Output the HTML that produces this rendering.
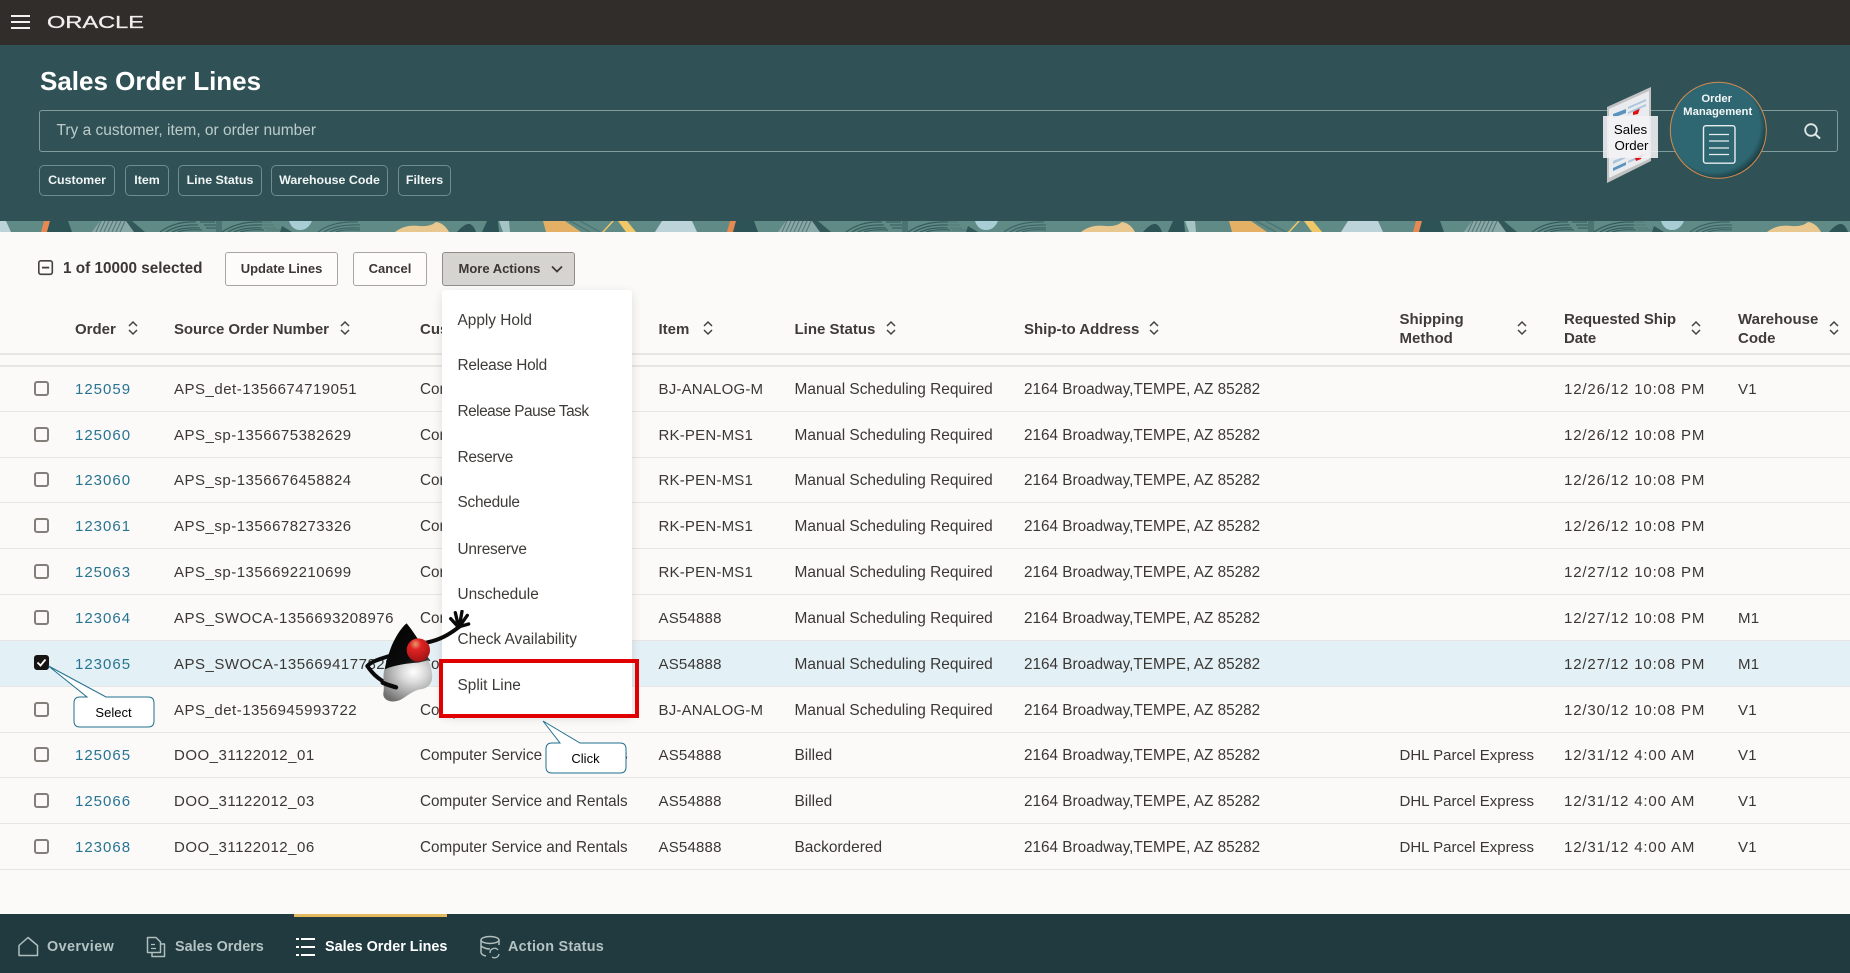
<!DOCTYPE html>
<html lang="en">
<head>
<meta charset="utf-8">
<title>Sales Order Lines</title>
<style>
*{box-sizing:border-box}
html,body{margin:0;padding:0;width:1850px;height:973px;overflow:hidden;background:#fbfaf8;font-family:"Liberation Sans",Arial,sans-serif;color:#3a3734}
.abs,.r,.h,.chip,.btn,.mi,.cb,.nav{position:absolute}
.chip{top:165px;height:31px;border:1.5px solid #6d8d8e;border-radius:5px;color:#f1f5f5;font-size:12.4px;font-weight:bold;line-height:28px;text-align:center;white-space:nowrap}
.btn{top:252px;height:34px;border:1.5px solid #a8a5a1;border-radius:3px;background:#fdfcfb;color:#3a3734;font-size:13px;font-weight:bold;line-height:32px;text-align:center;white-space:nowrap}
.h{font-size:15px;font-weight:bold;line-height:19px;color:#3f3b38;white-space:nowrap}
.r{left:0;width:1850px;height:46px;border-bottom:1.5px solid #e8e6e3;font-size:15px;line-height:46px}
.r span{position:absolute;top:1px;white-space:nowrap}
.r .o{left:75px;color:#287493;letter-spacing:1px}
.r .s{left:174px;letter-spacing:.5px}
.r .c{left:420px;font-size:15.25px}
.r .i{left:658.500px;letter-spacing:.2px}
.r .l{left:794.500px;font-size:15.450px}
.r .a{left:1024px;font-size:15.300px}
.r .m{left:1399.500px}
.r .d{left:1564px;letter-spacing:.85px}
.r .w{left:1738px;letter-spacing:.3px}
.cb{left:34px;top:15px;width:15px;height:15px;border:2px solid #827f7b;border-radius:3px;background:#fbfaf8}
.mi{left:457.500px;font-size:15.400px;line-height:20px;color:#3d3a37;white-space:nowrap}
.nav{top:938px;font-size:14.400px;line-height:18px;font-weight:bold;color:#b4c2c2;white-space:nowrap}
</style>
</head>
<body>
<div class="abs" style="left:0;top:0;width:1850px;height:45px;background:#312d2a"></div>
<svg class="abs" style="left:0;top:0" width="160" height="45" viewBox="0 0 160 45">
<rect x="11" y="15" width="19" height="2" fill="#f3f2f0"/><rect x="11" y="21" width="19" height="2" fill="#f3f2f0"/><rect x="11" y="27" width="19" height="2" fill="#f3f2f0"/>
<text x="47" y="28" font-family="Liberation Sans, Arial, sans-serif" font-size="17.500" fill="#f1efed" stroke="#f1efed" stroke-width=".3" textLength="97" lengthAdjust="spacingAndGlyphs">ORACLE</text>
</svg>

<div class="abs" style="left:0;top:45px;width:1850px;height:176px;background:#305256"></div>
<div class="abs" style="left:40px;top:65px;font-size:26px;font-weight:bold;line-height:32px;color:#fff;white-space:nowrap">Sales Order Lines</div>
<div class="abs" style="left:39px;top:110px;width:1799px;height:42px;border:1.5px solid #7f9b9c;border-radius:3px"></div>
<div class="abs" style="left:56.500px;top:121px;font-size:15.500px;line-height:19px;color:#bdcbcb;white-space:nowrap">Try a customer, item, or order number</div>
<svg class="abs" style="left:1800px;top:120px" width="24" height="24" viewBox="0 0 24 24"><circle cx="11" cy="10" r="5.800" fill="none" stroke="#dfe7e7" stroke-width="1.800"/><path d="M15.300 14.300L19.500 18" stroke="#dfe7e7" stroke-width="2" stroke-linecap="round"/></svg>
<div class="chip" style="left:39px;width:76px">Customer</div>
<div class="chip" style="left:125px;width:44px">Item</div>
<div class="chip" style="left:178px;width:84px">Line Status</div>
<div class="chip" style="left:271px;width:117px">Warehouse Code</div>
<div class="chip" style="left:398px;width:53px">Filters</div>

<svg class="abs" style="left:0;top:221px" width="1850" height="11" viewBox="0 0 1850 11">
<defs>
<pattern id="b" x="0" y="0" width="686" height="11" patternUnits="userSpaceOnUse">
<rect width="686" height="11" fill="#5f8a85"/>
<polygon points="662,0 692,0 697,11 655,11" fill="#bcd3d9"/>
<polygon points="-24,0 6,0 11,11 -31,11" fill="#bcd3d9"/>
<polygon points="44,0 50,0 47,11 41,11" fill="#e68a52"/>
<polygon points="50,0 68,0 72,11 47,11" fill="#2d5356"/>
<polygon points="100,0 128,0 138,11 92,11" fill="#8aa8a7"/>
<path d="M96 11L101 0M100 11L105 0M104 11L109 0M108 11L113 0M112 11L117 0M116 11L121 0M120 11L125 0" stroke="#577a78" stroke-width="1.200"/>
<polygon points="126,0 132,0 145,11 134,11" fill="#33585a"/>
<path d="M160 11Q175 0 196 1M166 11Q178 3 198 4M172 11Q182 6 200 7M178 11Q186 8 202 9M200 1H215M204 4H216M206 7H216M222 11Q238 0 262 1M228 11Q241 3 262 4M234 11Q245 6 262 7M240 11Q250 8 264 9" stroke="#33585a" stroke-width="1.100" fill="none"/>
<polygon points="216,0 222,0 222,11 216,11" fill="#4a7371"/>
<path d="M262 1L272 1M262 4L274 4M264 7L276 7M266 9L280 9" stroke="#537a78" stroke-width="1.100"/>
<polygon points="282,5 292,11 280,11" fill="#33585a"/>
<path d="M289 0H312Q308 9 300 9Q292 9 289 0Z" fill="#a9cdd4"/>
<path d="M318 11Q332 0 358 1M324 11Q336 3 360 4M330 11Q340 6 360 7M336 11Q344 8 360 9" stroke="#3b6163" stroke-width="1.100" fill="none"/>
<path d="M395 11Q405 3 420 5Q430 6 436 1Q444 2 449 11Z" fill="#e9c88f"/>
<path d="M457 11Q465 2 470 3Q474 5 476 11Z" fill="#2d5356"/>
<polygon points="482,11 487,0 498,0 499,11" fill="#2d5356"/>
<polygon points="499,0 509,0 510,11 503,11" fill="#a5c4c5"/>
<polygon points="543,0 565,0 581,11 546,11" fill="#e3b066"/>
<path d="M570 0L590 11M580 0L600 11" stroke="#4f7675" stroke-width="1.500"/>
<polygon points="612,0 614,0 604,11 602,11" fill="#f1c868"/>
<polygon points="618,0 627,0 636,11 626,11" fill="#f1c868"/>
</pattern>
</defs>
<rect width="1850" height="11" fill="url(#b)"/>
</svg>

<svg class="abs" style="left:37px;top:259px" width="18" height="18" viewBox="0 0 18 18"><rect x="1.800" y="1.800" width="13.500" height="13.500" rx="2" fill="none" stroke="#45413e" stroke-width="1.600"/><rect x="5" y="7.700" width="7.200" height="1.800" fill="#45413e"/></svg>
<div class="abs" style="left:63px;top:259px;font-size:15.300px;font-weight:bold;line-height:19px;color:#3a3734;white-space:nowrap">1 of 10000 selected</div>
<div class="btn" style="left:225px;width:113px">Update Lines</div>
<div class="btn" style="left:353px;width:74px">Cancel</div>
<div class="btn" style="left:442px;width:133px;background:#d6d4d1;border-color:#908d89;text-align:left;padding-left:15.500px">More Actions</div>
<svg class="abs" style="left:549px;top:262px" width="16" height="14" viewBox="0 0 16 14"><path d="M3 4.500L8 9.500L13 4.500" fill="none" stroke="#3a3734" stroke-width="1.700"/></svg>

<!-- Table header -->
<div class="h" style="left:75px;top:320px">Order</div>
<div class="h" style="left:174px;top:320px;letter-spacing:-.1px">Source Order Number</div>
<div class="h" style="left:420px;top:320px">Customer</div>
<div class="h" style="left:658.500px;top:320px">Item</div>
<div class="h" style="left:794.500px;top:320px">Line Status</div>
<div class="h" style="left:1024px;top:320px">Ship-to Address</div>
<div class="h" style="left:1399.500px;top:310px">Shipping<br>Method</div>
<div class="h" style="left:1564px;top:310px;letter-spacing:-.1px">Requested Ship<br>Date</div>
<div class="h" style="left:1738px;top:310px">Warehouse<br>Code</div>
<svg class="abs" style="left:0;top:315px" width="1850" height="30" viewBox="0 0 1850 30">
<g fill="none" stroke="#45413e" stroke-width="1.500">
<path d="M129 11l4-4 4 4M129 15l4 4 4-4"/>
<path d="M341 11l4-4 4 4M341 15l4 4 4-4"/>
<path d="M704 11l4-4 4 4M704 15l4 4 4-4"/>
<path d="M887 11l4-4 4 4M887 15l4 4 4-4"/>
<path d="M1150 11l4-4 4 4M1150 15l4 4 4-4"/>
<path d="M1518 11l4-4 4 4M1518 15l4 4 4-4"/>
<path d="M1692 11l4-4 4 4M1692 15l4 4 4-4"/>
<path d="M1830 11l4-4 4 4M1830 15l4 4 4-4"/>
</g>
</svg>
<div class="abs" style="left:0;top:353px;width:1850px;height:1.500px;background:#e8e6e3"></div>
<div class="abs" style="left:0;top:365px;width:1850px;height:1.500px;background:#e8e6e3"></div>

<!-- Rows -->
<div class="r" style="top:366px"><div class="cb"></div><span class="o">125059</span><span class="s">APS_det-1356674719051</span><span class="c">Computer</span><span class="i">BJ-ANALOG-M</span><span class="l">Manual Scheduling Required</span><span class="a">2164 Broadway,TEMPE, AZ 85282</span><span class="d">12/26/12 10:08 PM</span><span class="w">V1</span></div>
<div class="r" style="top:412px"><div class="cb"></div><span class="o">125060</span><span class="s">APS_sp-1356675382629</span><span class="c">Computer</span><span class="i">RK-PEN-MS1</span><span class="l">Manual Scheduling Required</span><span class="a">2164 Broadway,TEMPE, AZ 85282</span><span class="d">12/26/12 10:08 PM</span></div>
<div class="r" style="top:457px"><div class="cb"></div><span class="o">123060</span><span class="s">APS_sp-1356676458824</span><span class="c">Computer</span><span class="i">RK-PEN-MS1</span><span class="l">Manual Scheduling Required</span><span class="a">2164 Broadway,TEMPE, AZ 85282</span><span class="d">12/26/12 10:08 PM</span></div>
<div class="r" style="top:503px"><div class="cb"></div><span class="o">123061</span><span class="s">APS_sp-1356678273326</span><span class="c">Computer</span><span class="i">RK-PEN-MS1</span><span class="l">Manual Scheduling Required</span><span class="a">2164 Broadway,TEMPE, AZ 85282</span><span class="d">12/26/12 10:08 PM</span></div>
<div class="r" style="top:549px"><div class="cb"></div><span class="o">125063</span><span class="s">APS_sp-1356692210699</span><span class="c">Computer</span><span class="i">RK-PEN-MS1</span><span class="l">Manual Scheduling Required</span><span class="a">2164 Broadway,TEMPE, AZ 85282</span><span class="d">12/27/12 10:08 PM</span></div>
<div class="r" style="top:595px"><div class="cb"></div><span class="o">123064</span><span class="s">APS_SWOCA-1356693208976</span><span class="c">Computer</span><span class="i">AS54888</span><span class="l">Manual Scheduling Required</span><span class="a">2164 Broadway,TEMPE, AZ 85282</span><span class="d">12/27/12 10:08 PM</span><span class="w">M1</span></div>
<div class="r" style="top:641px;background:#e3f0f6"><div class="cb" style="background:#161513;border-color:#161513;top:14px"></div><span class="o">123065</span><span class="s">APS_SWOCA-1356694177828</span><span class="c">Computer</span><span class="i">AS54888</span><span class="l">Manual Scheduling Required</span><span class="a">2164 Broadway,TEMPE, AZ 85282</span><span class="d">12/27/12 10:08 PM</span><span class="w">M1</span></div>
<svg class="abs" style="left:34px;top:655px" width="15" height="15" viewBox="0 0 15 15"><path d="M3.500 7.500L6.500 10.500L11.500 4.500" fill="none" stroke="#fff" stroke-width="1.800"/></svg>
<div class="r" style="top:687px"><div class="cb"></div><span class="o">125064</span><span class="s">APS_det-1356945993722</span><span class="c">Computer</span><span class="i">BJ-ANALOG-M</span><span class="l">Manual Scheduling Required</span><span class="a">2164 Broadway,TEMPE, AZ 85282</span><span class="d">12/30/12 10:08 PM</span><span class="w">V1</span></div>
<div class="r" style="top:732px"><div class="cb"></div><span class="o">125065</span><span class="s">DOO_31122012_01</span><span class="c">Computer Service and Rentals</span><span class="i">AS54888</span><span class="l">Billed</span><span class="a">2164 Broadway,TEMPE, AZ 85282</span><span class="m">DHL Parcel Express</span><span class="d">12/31/12 4:00 AM</span><span class="w">V1</span></div>
<div class="r" style="top:778px"><div class="cb"></div><span class="o">125066</span><span class="s">DOO_31122012_03</span><span class="c">Computer Service and Rentals</span><span class="i">AS54888</span><span class="l">Billed</span><span class="a">2164 Broadway,TEMPE, AZ 85282</span><span class="m">DHL Parcel Express</span><span class="d">12/31/12 4:00 AM</span><span class="w">V1</span></div>
<div class="r" style="top:824px"><div class="cb"></div><span class="o">123068</span><span class="s">DOO_31122012_06</span><span class="c">Computer Service and Rentals</span><span class="i">AS54888</span><span class="l">Backordered</span><span class="a">2164 Broadway,TEMPE, AZ 85282</span><span class="m">DHL Parcel Express</span><span class="d">12/31/12 4:00 AM</span><span class="w">V1</span></div>

<!-- Menu -->
<div class="abs" style="left:442px;top:290px;width:190px;height:425px;background:#fff;border-radius:3px;box-shadow:0 3px 10px rgba(0,0,0,.12)"></div>
<div class="mi" style="top:311px">Apply Hold</div>
<div class="mi" style="top:356px;letter-spacing:-.25px">Release Hold</div>
<div class="mi" style="top:402px;letter-spacing:-.5px">Release Pause Task</div>
<div class="mi" style="top:448px;letter-spacing:-.25px">Reserve</div>
<div class="mi" style="top:493px;letter-spacing:-.25px">Schedule</div>
<div class="mi" style="top:540px;letter-spacing:-.2px">Unreserve</div>
<div class="mi" style="top:585px">Unschedule</div>
<div class="mi" style="top:630px">Check Availability</div>
<div class="mi" style="top:676px">Split Line</div>
<div class="abs" style="left:439px;top:659px;width:200px;height:59px;border:4px solid #e00000"></div>

<!-- Callouts -->
<svg class="abs" style="left:0;top:640px" width="660" height="140" viewBox="0 640 660 140">
<path d="M80 697H87L48.500 666L106 697H148q6 0 6 6V721q0 6-6 6H80q-6 0-6-6V703q0-6 6-6Z" fill="#fff" stroke="#1f6f8e" stroke-width="1"/>
<text x="113.500" y="717" font-family="Liberation Sans, Arial, sans-serif" font-size="13" fill="#000" text-anchor="middle">Select</text>
<path d="M552 743H560L543 721L580 743H620q6 0 6 6V767q0 6-6 6H552q-6 0-6-6V749q0-6 6-6Z" fill="#fff" stroke="#1f6f8e" stroke-width="1"/>
<text x="585.500" y="763" font-family="Liberation Sans, Arial, sans-serif" font-size="13" fill="#000" text-anchor="middle">Click</text>
</svg>

<!-- Duke mascot -->
<svg class="abs" style="left:340px;top:610px" width="160" height="110" viewBox="0 0 480 330">
<defs>
<radialGradient id="dn" cx=".38" cy=".25" r=".8"><stop offset="0" stop-color="#e89a70"/><stop offset=".3" stop-color="#e02424"/><stop offset="1" stop-color="#a01212"/></radialGradient>
<radialGradient id="db" cx=".62" cy=".3" r=".8"><stop offset="0" stop-color="#ffffff"/><stop offset=".3" stop-color="#dcdcdc"/><stop offset=".7" stop-color="#a0a0a0"/><stop offset="1" stop-color="#6e6e6e"/></radialGradient>
<linearGradient id="dh" x1="0" y1="0" x2="1" y2="1"><stop offset="0" stop-color="#000"/><stop offset=".65" stop-color="#0c0c0c"/><stop offset="1" stop-color="#555"/></linearGradient>
</defs>
<path d="M148 138C118 148 95 154 82 168C98 192 120 215 165 230" fill="none" stroke="#0a0a0a" stroke-width="12" stroke-linejoin="round" stroke-linecap="round"/>
<path d="M134 175C126 200 135 225 130 250C128 268 150 280 175 272C195 265 210 245 240 238C268 235 280 215 276 190C274 170 268 155 262 148C220 155 170 160 134 175Z" fill="url(#db)"/>
<path d="M200 40C188 48 165 80 152 115C145 135 138 155 134 178C165 165 200 160 235 158L268 150C255 120 225 70 200 40Z" fill="url(#dh)"/>
<path d="M128 218C145 226 155 228 168 232" stroke="#0a0a0a" stroke-width="13" stroke-linecap="round" fill="none"/>
<path d="M258 98C300 90 330 72 358 50" fill="none" stroke="#0a0a0a" stroke-width="12" stroke-linecap="round"/>
<path d="M356 52L332 26M356 52L346 8M358 50L366 4M358 50L382 16M358 50L386 42" stroke="#0a0a0a" stroke-width="10" stroke-linecap="round" fill="none"/>
<circle cx="235" cy="120" r="35" fill="url(#dn)"/>
</svg>

<!-- Tutorial overlay icons -->
<svg class="abs" style="left:1500px;top:60px" width="350" height="190" viewBox="0 0 350 190">
<defs>
<radialGradient id="ci" cx=".45" cy=".45" r=".56"><stop offset="0" stop-color="#2e6771"/><stop offset=".86" stop-color="#2e6771"/><stop offset="1" stop-color="#1d3f45"/></radialGradient>
</defs>
<polygon points="107,47 151,27 151,101 107,123" fill="#c2c2c2"/>
<polygon points="109,49 149,31 149,99 109,118" fill="#e9ebee"/>
<polygon points="113,54 126,49 126,53 113,58" fill="#5a93bd"/>
<polygon points="128,47 146,39 146,41 128,49" fill="#a9c6dd"/>
<polygon points="133,52 140,48 138,54 133,55" fill="#e01010"/>
<polygon points="128,52 146,44 146,46 128,54" fill="#a9c6dd"/>
<polygon points="113,108 126,102 126,105 113,111" fill="#5a93bd"/>
<polygon points="128,101 146,93 146,95 128,103" fill="#a9c6dd"/>
<polygon points="135,98 143,94 141,99 136,101" fill="#e01010"/>
<polygon points="113,101 126,96 126,98 113,104" fill="#a9c6dd"/>
<rect x="103" y="56" width="55" height="42" fill="#f2f3f5" fill-opacity=".88"/>
<text x="130.500" y="74" font-family="Liberation Sans, Arial, sans-serif" font-size="13.300" fill="#000" text-anchor="middle">Sales</text>
<text x="131.500" y="90" font-family="Liberation Sans, Arial, sans-serif" font-size="13.300" fill="#000" text-anchor="middle">Order</text>
<circle cx="218.300" cy="70.300" r="48" fill="url(#ci)" stroke="#d68b4e" stroke-width="1"/>
<text x="216.700" y="42" font-family="Liberation Sans, Arial, sans-serif" font-size="11.300" font-weight="bold" fill="#f2f6f6" text-anchor="middle">Order</text>
<text x="217.700" y="55" font-family="Liberation Sans, Arial, sans-serif" font-size="11.300" font-weight="bold" fill="#f2f6f6" text-anchor="middle">Management</text>
<rect x="203.500" y="65.700" width="31.500" height="37.500" rx="2.500" fill="none" stroke="#e8eeee" stroke-width="1.400"/>
<path d="M209 74.500H229M209 81H229M209 88H229M209 94.500H229" stroke="#e8eeee" stroke-width="1.300"/>
</svg>

<!-- Bottom nav -->
<div class="abs" style="left:0;top:914px;width:1850px;height:59px;background:#203a3f"></div>
<div class="abs" style="left:294px;top:914px;width:153px;height:3px;background:#e3b95f"></div>
<svg class="abs" style="left:0;top:930px" width="620" height="34" viewBox="0 0 620 34">
<g fill="none" stroke="#b0bebe" stroke-width="1.500" stroke-linejoin="round">
<path d="M19 25.500V15.500L28 7.500L37.500 15.500V25.500Z"/>
<path d="M147.500 7.500H156L160.500 12V22.500H147.500Z"/>
<path d="M160.500 14H164.500V26.500H152V22.500"/>
<path d="M151 14.500H155M151 18.500H156" stroke-width="1.300"/>
<ellipse cx="490" cy="10" rx="9" ry="3.500"/>
<path d="M481 10V22Q481 25 486 26M499 10V15M481 16Q485 19 490 19"/>
<path d="M490 23A4.500 4.500 0 0 1 498 20M499 24A4.500 4.500 0 0 1 492 27" stroke-width="1.300"/>
</g>
<g fill="#fff">
<rect x="296" y="8" width="3" height="2"/><rect x="301" y="8" width="14" height="2"/>
<rect x="296" y="16" width="3" height="2"/><rect x="301" y="16" width="14" height="2"/>
<rect x="296" y="24" width="3" height="2"/><rect x="301" y="24" width="14" height="2"/>
</g>
</svg>
<div class="nav" style="left:47px;letter-spacing:.4px">Overview</div>
<div class="nav" style="left:175px">Sales Orders</div>
<div class="nav" style="left:325px;color:#fff">Sales Order Lines</div>
<div class="nav" style="left:508px;letter-spacing:.25px">Action Status</div>
</body>
</html>
